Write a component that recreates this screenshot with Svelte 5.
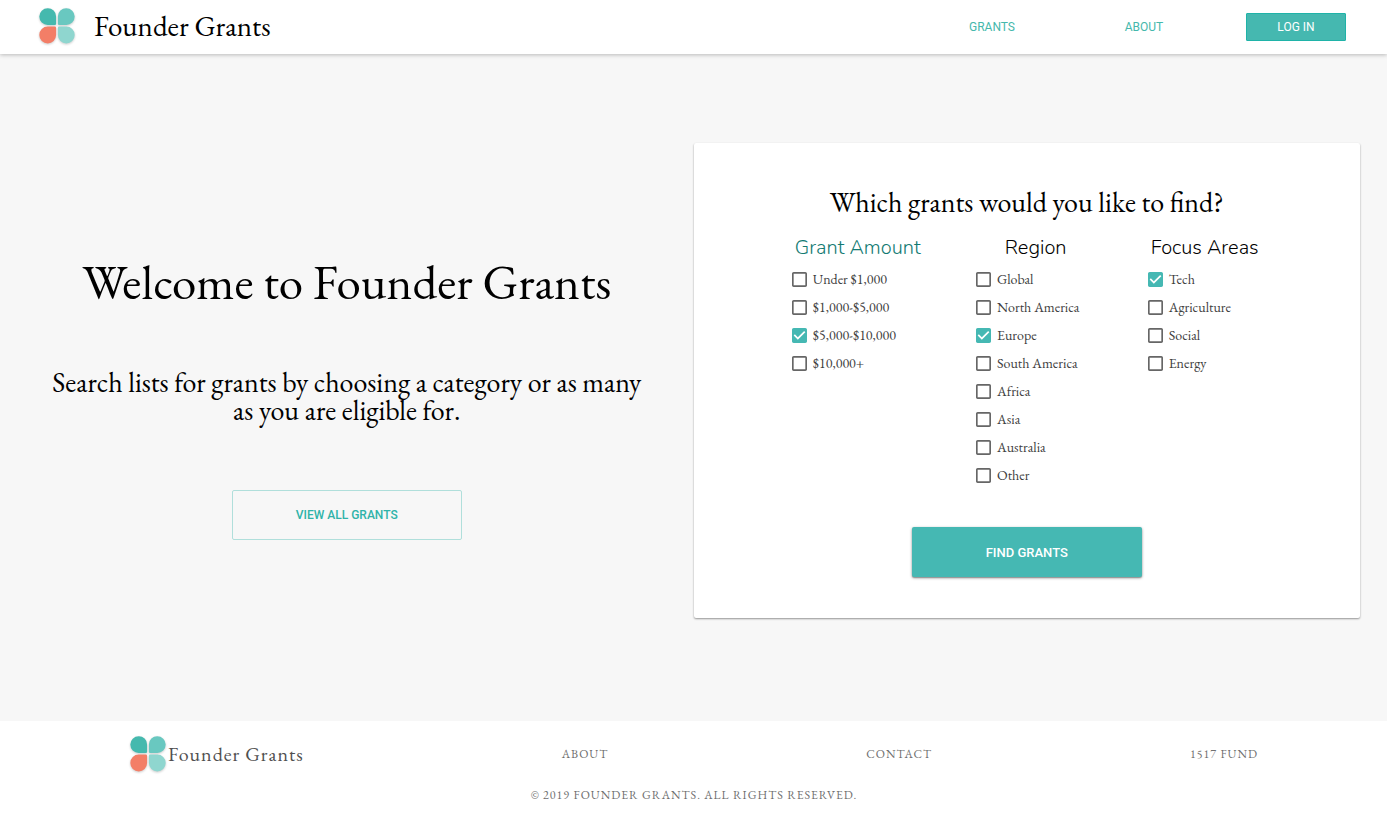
<script>
  let groups = $state([
    {
      title: 'Grant Amount',
      active: true,
      options: [
        { label: 'Under $1,000', checked: false },
        { label: '$1,000-$5,000', checked: false },
        { label: '$5,000-$10,000', checked: true },
        { label: '$10,000+', checked: false }
      ]
    },
    {
      title: 'Region',
      active: false,
      options: [
        { label: 'Global', checked: false },
        { label: 'North America', checked: false },
        { label: 'Europe', checked: true },
        { label: 'South America', checked: false },
        { label: 'Africa', checked: false },
        { label: 'Asia', checked: false },
        { label: 'Australia', checked: false },
        { label: 'Other', checked: false }
      ]
    },
    {
      title: 'Focus Areas',
      active: false,
      options: [
        { label: 'Tech', checked: true },
        { label: 'Agriculture', checked: false },
        { label: 'Social', checked: false },
        { label: 'Energy', checked: false }
      ]
    }
  ]);
</script>

{#snippet logo()}
  <svg class="logo" viewBox="0 0 36 36" width="36" height="36" aria-hidden="true">
    <path fill="#45b9ae" d="M8.7 0.2a8.3 8.3 0 0 1 8.4 8.3v7.2a1.3 1.3 0 0 1-1.3 1.3H8.7a8.3 8.3 0 0 1 0-16.8z" />
    <path fill="#69c8c0" d="M27.3 0.2a8.3 8.3 0 0 1 0 16.8h-7.1a1.3 1.3 0 0 1-1.3-1.3V8.5a8.3 8.3 0 0 1 8.4-8.3z" />
    <path fill="#f37e67" d="M8.7 35.4a8.3 8.3 0 0 1 0-16.8h7.1a1.3 1.3 0 0 1 1.3 1.3v7.2a8.3 8.3 0 0 1-8.4 8.3z" />
    <path fill="#8fd6cf" d="M27.3 35.4a8.3 8.3 0 0 1-8.4-8.3v-7.2a1.3 1.3 0 0 1 1.3-1.3h7.1a8.3 8.3 0 0 1 0 16.8z" />
  </svg>
{/snippet}

<div class="page">
  <header>
    <a class="brand" href="#home">{@render logo()}<span>Founder Grants</span></a>
    <nav>
      <a href="#grants">Grants</a>
      <a href="#about">About</a>
      <button type="button">Log in</button>
    </nav>
  </header>

  <main>
    <section class="intro">
      <h1>Welcome to Founder Grants</h1>
      <p>Search lists for grants by choosing a category or as many as you are eligible for.</p>
      <button class="outlined" type="button">View all grants</button>
    </section>

    <form class="card" onsubmit={(e) => e.preventDefault()}>
      <h2>Which grants would you like to find?</h2>
      <div class="groups">
        {#each groups as group}
          <fieldset>
            <legend class:active={group.active}>{group.title}</legend>
            {#each group.options as option}
              <label>
                <input type="checkbox" bind:checked={option.checked} />
                <svg class="box" viewBox="3 3 18 18" width="15" height="15" aria-hidden="true">
                  {#if option.checked}
                    <path fill="#45b8b3" d="M19 3H5c-1.11 0-2 .9-2 2v14c0 1.1.89 2 2 2h14c1.11 0 2-.9 2-2V5c0-1.1-.89-2-2-2zm-9 14l-5-5 1.41-1.41L10 14.17l7.59-7.59L19 8l-9 9z" />
                  {:else}
                    <path fill="#666" d="M19 5v14H5V5h14m0-2H5c-1.1 0-2 .9-2 2v14c0 1.1.9 2 2 2h14c1.1 0 2-.9 2-2V5c0-1.1-.9-2-2-2z" />
                  {/if}
                </svg>
                {option.label}
              </label>
            {/each}
          </fieldset>
        {/each}
      </div>
      <button class="contained" type="submit">Find grants</button>
    </form>
  </main>

  <footer>
    <div class="links">
      <a class="brand" href="#home">{@render logo()}<span>Founder Grants</span></a>
      <a href="#about">About</a>
      <a href="#contact">Contact</a>
      <a href="#fund">1517 Fund</a>
    </div>
    <p>© 2019 Founder Grants. All rights reserved.</p>
  </footer>
</div>

<style>
  :global(body) {
    margin: 0;
  }
  .page {
    min-height: 100vh;
    display: flex;
    flex-direction: column;
    background: #f7f7f7;
    color: #000;
    font-family: 'EB Garamond', 'Liberation Serif', serif;
  }
  a {
    color: inherit;
    text-decoration: none;
  }
  button {
    font-family: Roboto, sans-serif;
    font-weight: 500;
    text-transform: uppercase;
    cursor: pointer;
  }
  .logo {
    display: block;
    flex: none;
    overflow: visible;
    filter: drop-shadow(0 1px 1px rgba(0, 0, 0, 0.2));
  }
  .brand {
    display: flex;
    align-items: center;
  }

  header {
    display: flex;
    align-items: center;
    justify-content: space-between;
    height: 54px;
    padding: 0 41px 0 39px;
    background: #fff;
    box-shadow: 0 1px 4px rgba(0, 0, 0, 0.25);
    position: relative;
  }
  header .brand {
    gap: 19px;
    padding-bottom: 2px;
    font-size: 29px;
  }
  nav {
    display: flex;
    align-items: center;
    gap: 52px;
    font: 12px Roboto, sans-serif;
  }
  nav a {
    width: 100px;
    text-align: center;
    text-transform: uppercase;
    color: #45b8ac;
  }
  nav button {
    width: 100px;
    height: 28px;
    padding: 0;
    border: 1px solid #1fb3a8;
    border-radius: 1px;
    background: #45b8b0;
    color: #fff;
    font-size: 12px;
    font-weight: 400;
  }

  main {
    flex: 1;
    display: grid;
    grid-template-columns: 1fr 1fr;
    align-items: start;
    padding: 89px 0 0;
  }
  .intro {
    display: flex;
    flex-direction: column;
    align-items: center;
    padding: 111px 44px 0;
    text-align: center;
  }
  h1,
  h2 {
    margin: 0;
    font-weight: 400;
  }
  h1 {
    font-size: 49px;
    line-height: 56px;
  }
  .intro p {
    margin: 58px 0 66px;
    font-size: 28px;
    line-height: 28px;
  }
  .outlined,
  .contained {
    width: 230px;
    height: 50px;
    padding: 0;
    border-radius: 2px;
  }
  .outlined {
    border: 1px solid #b0dfdb;
    background: transparent;
    color: #2fb3a9;
    font-size: 12px;
  }
  .contained {
    border: 0;
    background: #45b8b3;
    color: #fff;
    font-size: 13px;
    box-shadow: 0 1px 3px rgba(0, 0, 0, 0.4), 0 1px 1px rgba(0, 0, 0, 0.2);
  }

  .card {
    display: flex;
    flex-direction: column;
    align-items: center;
    margin-right: 27px;
    padding: 43px 0 41px;
    border-radius: 2px;
    background: #fff;
    box-shadow: 0 1px 2px rgba(0, 0, 0, 0.4);
  }
  h2 {
    font-size: 28px;
    line-height: 32px;
  }
  .groups {
    align-self: stretch;
    display: flex;
    justify-content: space-evenly;
    margin: 17px 0 38px;
    padding: 0 46px;
  }
  fieldset {
    display: flex;
    flex-direction: column;
    min-width: 0;
    margin: 0;
    padding: 0;
    border: 0;
  }
  legend {
    margin: 0 auto 4px;
    padding: 0 3px;
    font: 300 20px/26px Nunito, Lato, sans-serif;
  }
  legend.active {
    color: #127a72;
  }
  label {
    display: flex;
    align-items: center;
    gap: 6px;
    height: 28px;
    margin-right: 16px;
    color: #404040;
    font-size: 14px;
    white-space: nowrap;
    cursor: pointer;
  }
  input {
    position: absolute;
    width: 15px;
    height: 15px;
    margin: 0;
    opacity: 0;
    cursor: pointer;
  }
  .box {
    display: block;
    flex: none;
  }

  footer {
    padding: 15px 129px 12px 130px;
    background: #fff;
    color: #707070;
    font-size: 12px;
    letter-spacing: 1px;
  }
  .links {
    display: flex;
    align-items: center;
    justify-content: space-between;
    margin-bottom: 13px;
  }
  .links a,
  footer p {
    text-transform: uppercase;
  }
  .links .brand {
    gap: 2px;
    color: #505050;
    font-size: 20px;
    text-transform: none;
  }
  footer p {
    margin: 0;
    line-height: 20px;
    text-align: center;
  }
</style>
